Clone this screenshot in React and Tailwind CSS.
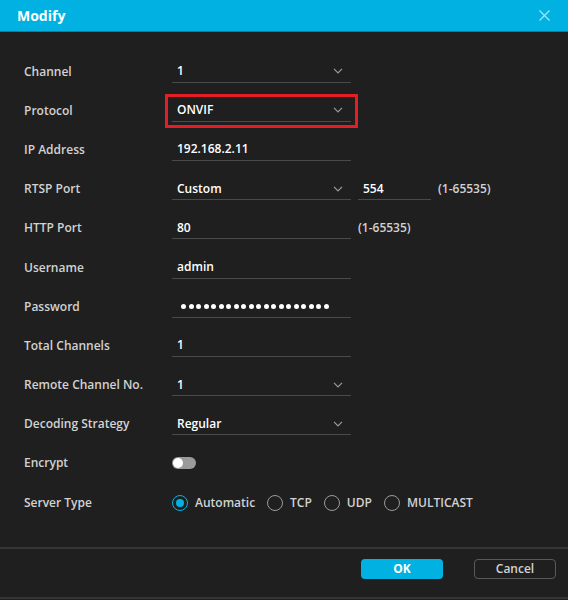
import { useState } from "react";

const font = { fontFamily: '"Open Sans", "Liberation Sans", sans-serif' };

function Chevron() {
  return (
    <svg width="10" height="6" viewBox="0 0 10 6" className="shrink-0">
      <path d="M1 0.8 L5 5 L9 0.8" fill="none" stroke="#9a9a9a" strokeWidth="1.2" />
    </svg>
  );
}

function Field({ value, select, className = "w-[179px]" }) {
  return (
    <div className={`flex h-[22px] items-center justify-between border-b border-[#4a4a4a] pl-[5px] pr-[8px] ${className}`}>
      <span className="text-[12px] font-semibold text-white">{value}</span>
      {select && <Chevron />}
    </div>
  );
}

function Row({ label, children }) {
  return (
    <div className="flex h-[39.2px] items-center">
      <div className="w-[148px] shrink-0 text-[12px] font-semibold text-[#d2d2d2]">{label}</div>
      <div className="flex items-center">{children}</div>
    </div>
  );
}

function Radio({ label, checked, onClick }) {
  return (
    <button onClick={onClick} className="mr-[12px] flex items-center gap-[7px]">
      <span
        className={`flex h-[16px] w-[16px] items-center justify-center rounded-full border ${
          checked ? "border-[#00b1e1]" : "border-[#9a9a9a]"
        }`}
      >
        {checked && <span className="h-[8px] w-[8px] rounded-full bg-[#00b1e1]" />}
      </span>
      <span className="text-[12px] font-semibold text-[#d2d2d2]">{label}</span>
    </button>
  );
}

export default function App() {
  const [serverType, setServerType] = useState("Automatic");
  const [encrypt, setEncrypt] = useState(false);

  return (
    <div className="flex h-[600px] w-[568px] flex-col bg-[#1f1f1f]" style={font}>
      {/* Header */}
      <div className="flex h-[31px] items-center justify-between bg-[#00b1e1] pl-[17px] pr-[18px]">
        <span className="text-[14px] font-bold text-white">Modify</span>
        <svg width="11" height="11" viewBox="0 0 11 11">
          <path d="M0.5 0.5 L10.5 10.5 M10.5 0.5 L0.5 10.5" stroke="#a6e4f4" strokeWidth="1.2" />
        </svg>
      </div>
      <div className="h-[1px] bg-[#0a7c9c]" />

      {/* Form */}
      <div className="flex-1 pl-[24px] pt-[20px]">
        <Row label="Channel">
          <Field value="1" select />
        </Row>
        <Row label="Protocol">
          <div className="-ml-[7px] border-[3px] border-[#e51d26] px-[4px] py-[3px]">
            <Field value="ONVIF" select />
          </div>
        </Row>
        <Row label="IP Address">
          <Field value="192.168.2.11" />
        </Row>
        <Row label="RTSP Port">
          <Field value="Custom" select />
          <Field value="554" className="ml-[7px] w-[73px]" />
          <span className="ml-[7px] text-[12px] font-semibold text-[#d2d2d2]">(1-65535)</span>
        </Row>
        <Row label="HTTP Port">
          <Field value="80" />
          <span className="ml-[7px] text-[12px] font-semibold text-[#d2d2d2]">(1-65535)</span>
        </Row>
        <Row label="Username">
          <Field value="admin" />
        </Row>
        <Row label="Password">
          <div className="flex h-[22px] w-[179px] items-center gap-[2.5px] border-b border-[#4a4a4a] pl-[9px]">
            {Array.from({ length: 20 }).map((_, i) => (
              <span key={i} className="h-[5px] w-[5px] rounded-full bg-white" />
            ))}
          </div>
        </Row>
        <Row label="Total Channels">
          <Field value="1" />
        </Row>
        <Row label="Remote Channel No.">
          <Field value="1" select />
        </Row>
        <Row label="Decoding Strategy">
          <Field value="Regular" select />
        </Row>
        <Row label="Encrypt">
          <button
            onClick={() => setEncrypt(!encrypt)}
            className={`flex h-[12px] w-[24px] items-center rounded-full px-[1px] ${
              encrypt ? "justify-end bg-[#00b1e1]" : "bg-[#9a9a9a]"
            }`}
          >
            <span className="h-[10px] w-[10px] rounded-full bg-white" />
          </button>
        </Row>
        <Row label="Server Type">
          <div className="flex items-center">
            {["Automatic", "TCP", "UDP", "MULTICAST"].map((t) => (
              <Radio key={t} label={t} checked={serverType === t} onClick={() => setServerType(t)} />
            ))}
          </div>
        </Row>
      </div>

      {/* Footer */}
      <div className="h-[2px] bg-[#353535]" />
      <div className="flex h-[48px] items-start justify-end gap-[31px] pr-[12px] pt-[10px]">
        <button className="h-[20px] w-[82px] rounded-[4px] bg-[#00b1e1] text-[12px] font-bold text-white">
          OK
        </button>
        <button className="h-[20px] w-[82px] rounded-[4px] border border-[#5a5a5a] text-[12px] font-semibold text-[#d2d2d2]">
          Cancel
        </button>
      </div>
      <div className="h-[2px] bg-[#353535]" />
      <div className="h-[1px]" />
    </div>
  );
}
